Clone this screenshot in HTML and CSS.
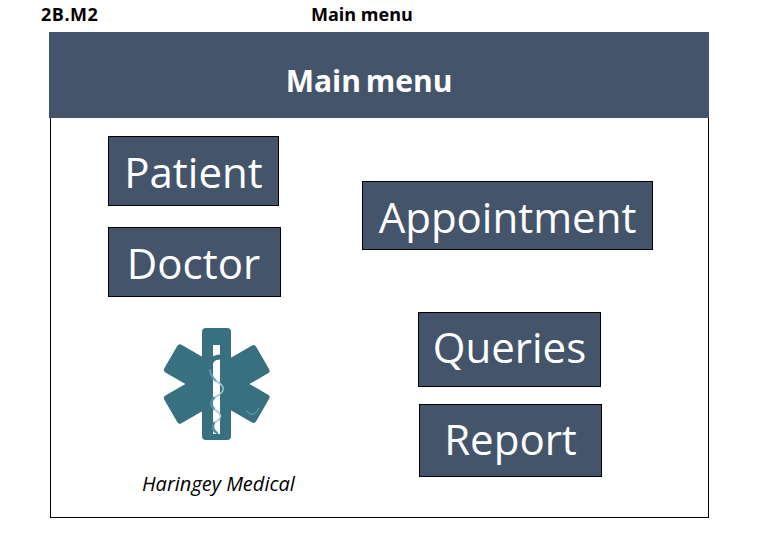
FILE: index.html
```html
<!DOCTYPE html>
<html>
<head>
	<meta charset="UTF-8">
	<link rel="stylesheet" href="styles.css">
</head>
<body>
	<div class="topline">
		<span class="page_id">2B.M2</span>
		<span class="page_name">Main menu</span>
	</div>
	<div class="frame">
		<div class="banner">Main menu</div>
		<div class="panel">
			<div class="col_left">
				<div class="btn btn_patient">Patient</div>
				<div class="btn btn_doctor">Doctor</div>
				<svg class="logo" width="108" height="114" viewBox="0 0 108 114">
					<g fill="#38707f">
						<rect x="39" y="0" width="29" height="112" rx="4"/>
						<rect x="38" y="3" width="32" height="106" rx="3" transform="rotate(60 53.5 56)"/>
						<rect x="38" y="3" width="32" height="106" rx="3" transform="rotate(-60 53.5 56)"/>
					</g>
					<rect x="50" y="17" width="7" height="89" fill="#fff"/>
					<!-- snake: thick on the sides of the staff, thin where it crosses -->
					<g fill="none" stroke-linecap="round">
						<path d="M58 29 C50 29 46 33 47 42" stroke="#38707f" stroke-width="5"/>
						<path d="M47 42 C47 47 50 50 53 53" stroke="#5b9db3" stroke-width="2"/>
						<path d="M53 53 C58 56 61 58 60 62 C59 66 54 68 51 70" stroke="#9cc6d3" stroke-width="1.5"/>
						<path d="M51 70 C47 73 48 78 51 81" stroke="#4f8ea3" stroke-width="2.5"/>
						<path d="M51 81 C55 84 59 86 57 90 C56 93 53 93 51 95" stroke="#9cc6d3" stroke-width="1.5"/>
						<path d="M51 95 C49 98 50 103 54 105" stroke="#4f8ea3" stroke-width="2.5"/>
						<path d="M84 83 C88 88 92 88 96 80" stroke="#6fa8b8" stroke-width="1"/>
					</g>
				</svg>
				<div class="caption">Haringey Medical</div>
			</div>
			<div class="col_right">
				<div class="btn btn_appointment">Appointment</div>
				<div class="btn btn_queries">Queries</div>
				<div class="btn btn_report">Report</div>
			</div>
		</div>
	</div>
</body>
</html>
```

FILE: styles.css
```css
body {
	background: white;
	margin: 0px;
	font-family: "Open Sans", sans-serif;
	color: black;
}

.topline {
	display: flex;
	height: 32px;
	padding: 2px 0 0 41px;
	box-sizing: border-box;
	font-size: 18px;
	font-weight: bold;
	line-height: 24px;
}

.page_id {
	width: 270px;
	letter-spacing: 0.5px;
}

.frame {
	width: 660px;
	margin-left: 49px;
}

.banner {
	display: flex;
	align-items: center;
	justify-content: center;
	height: 86px;
	padding: 10px 20px 0 0;
	box-sizing: border-box;
	background: #44546a;
	color: white;
	font-size: 30px;
	font-weight: bold;
	word-spacing: -3px;
}

.panel {
	display: flex;
	height: 400px;
	margin-left: 1px;
	box-sizing: border-box;
	border: black 1px solid;
	border-top: none;
}

.col_left {
	display: flex;
	flex-direction: column;
	align-items: flex-start;
	width: 254px;
	margin-left: 57px;
	padding-top: 18px;
}

.col_right {
	display: flex;
	flex-direction: column;
	align-items: flex-start;
	padding-top: 63px;
}

.btn {
	display: flex;
	align-items: center;
	justify-content: center;
	box-sizing: border-box;
	background: #44546a;
	border: black 1px solid;
	color: white;
	font-size: 42px;
}

.btn_patient {
	width: 171px;
	height: 70px;
}

.btn_doctor {
	width: 173px;
	height: 70px;
	margin-top: 21px;
	padding-right: 2px;
}

.btn_appointment {
	width: 291px;
	height: 69px;
	padding-top: 2px;
}

.btn_queries {
	width: 183px;
	height: 75px;
	margin: 62px 0 0 56px;
	padding-bottom: 6px;
}

.btn_report {
	width: 183px;
	height: 73px;
	margin: 17px 0 0 57px;
	padding-bottom: 4px;
}

.logo {
	margin: 31px 0 0 55px;
}

.caption {
	margin: 29px 0 0 34px;
	font-size: 20px;
	font-style: italic;
	line-height: 26px;
}
```
